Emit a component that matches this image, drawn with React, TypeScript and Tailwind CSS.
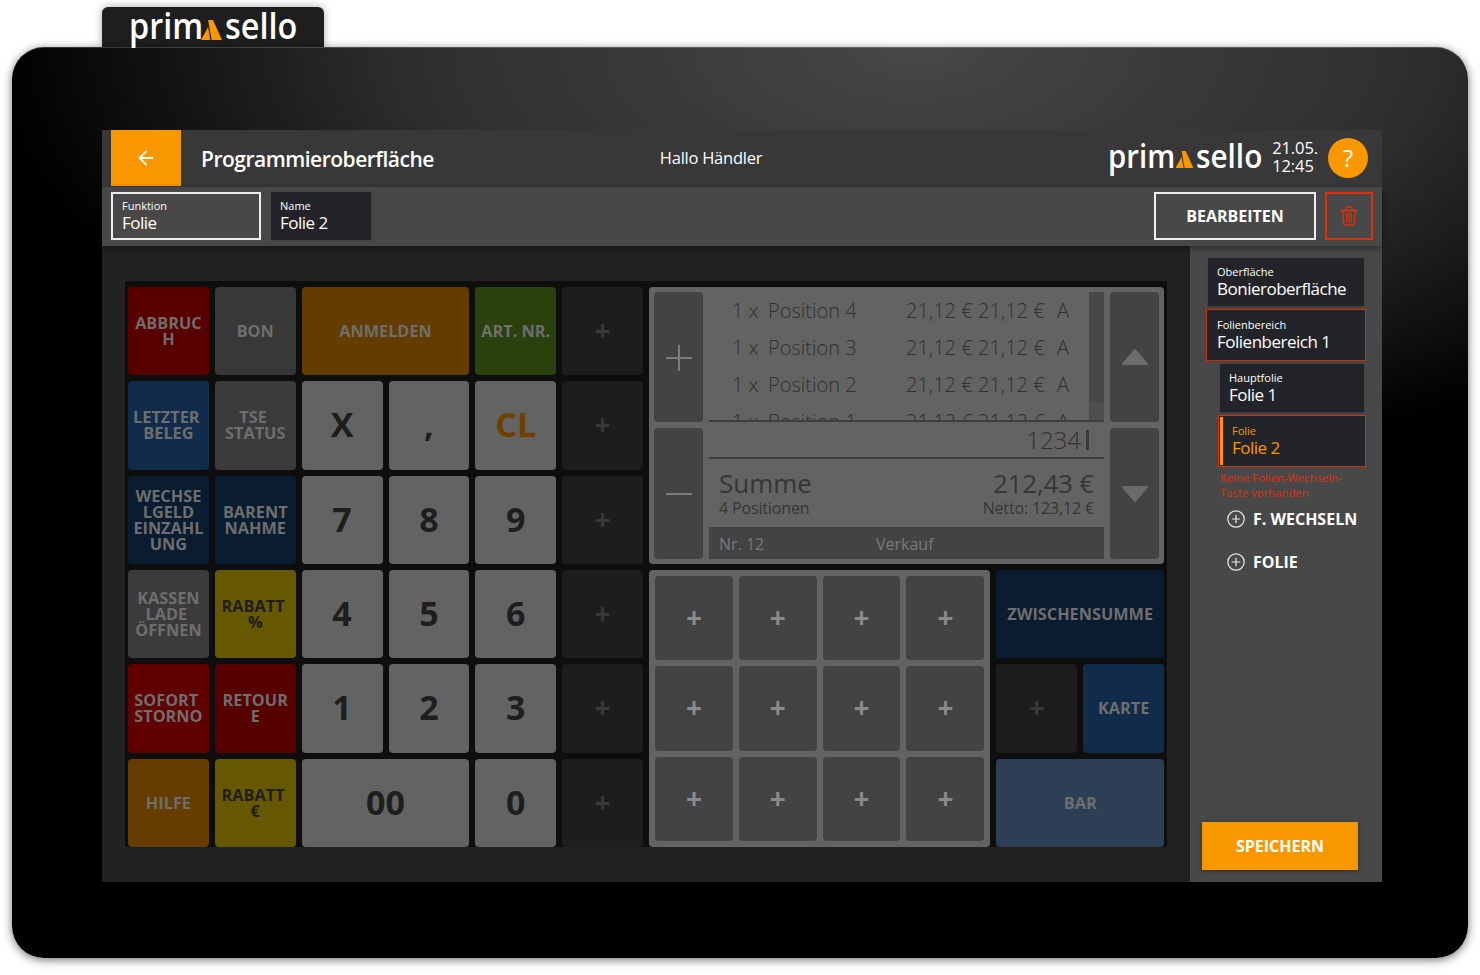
import React from 'react';
import { Plus, Minus, ArrowLeft } from 'lucide-react';

const openSans = { fontFamily: '"Open Sans", sans-serif' };

const LogoMark = ({ className }: { className: string }) => (
  <svg viewBox="0 0 65 62" className={className}>
    <path d="M0 62 L22 22 L29 62 Z" fill="#f99700" />
    <path d="M22 0 L37 0 L65 62 L33 62 Z" fill="#f99700" />
  </svg>
);

const Logo = ({ small }: { small?: boolean }) =>
  small ? (
    <div className="mb-[5px] flex h-[33px] items-end text-[33px] font-semibold leading-[33px] text-white">
      <span className="inline-block w-[64px] origin-left scale-x-[0.89] whitespace-nowrap">prim</span>
      <LogoMark className="mb-[4px] ml-[3px] h-[17px] w-[19px]" />
      <span className="ml-[2px] inline-block w-[66px] origin-left scale-x-[0.9] whitespace-nowrap">sello</span>
    </div>
  ) : (
    <div className="flex h-[36px] items-end text-[36px] font-semibold leading-[36px] text-white">
      <span className="inline-block w-[71px] origin-left scale-x-[0.9] whitespace-nowrap">prim</span>
      <LogoMark className="mb-[4px] ml-px h-[20px] w-[21px]" />
      <span className="ml-[3px] inline-block w-[72px] origin-left scale-x-[0.9] whitespace-nowrap">sello</span>
    </div>
  );

type Cell = { label: string; bg: string; text: string; span?: string; size?: string };

const dimText = 'text-[#6e6e6e]';

const keys: Cell[] = [
  { label: 'ABBRUCH', bg: 'bg-[#580000]', text: dimText },
  { label: 'BON', bg: 'bg-[#383838]', text: dimText },
  { label: 'ANMELDEN', bg: 'bg-[#653c00]', text: dimText, span: 'col-span-2' },
  { label: 'ART. NR.', bg: 'bg-[#2a400d]', text: dimText },
  { label: '+', bg: 'bg-[#1d1d1d]', text: 'text-[#383838]' },
  { label: 'LETZTER\u00a0 BELEG', bg: 'bg-[#112c4a]', text: dimText },
  { label: 'TSE\u00a0 STATUS', bg: 'bg-[#3b3b3b]', text: dimText },
  { label: 'X', bg: 'bg-[#636363]', text: 'text-[#1e1e1e]', size: 'key' },
  { label: ',', bg: 'bg-[#636363]', text: 'text-[#1e1e1e]', size: 'key' },
  { label: 'CL', bg: 'bg-[#636363]', text: 'text-[#6e4100]', size: 'key' },
  { label: '+', bg: 'bg-[#1d1d1d]', text: 'text-[#383838]' },
  { label: 'WECHSELGELD EINZAHLUNG', bg: 'bg-[#0a1c30]', text: dimText },
  { label: 'BARENTNAHME', bg: 'bg-[#0a1c30]', text: dimText },
  { label: '7', bg: 'bg-[#636363]', text: 'text-[#1e1e1e]', size: 'key' },
  { label: '8', bg: 'bg-[#636363]', text: 'text-[#1e1e1e]', size: 'key' },
  { label: '9', bg: 'bg-[#636363]', text: 'text-[#1e1e1e]', size: 'key' },
  { label: '+', bg: 'bg-[#1d1d1d]', text: 'text-[#383838]' },
];

const keysLower: Cell[][] = [
  [
    { label: 'KASSEN LADE\u00a0 ÖFFNEN', bg: 'bg-[#3b3b3b]', text: dimText },
    { label: 'RABATT\u00a0 %', bg: 'bg-[#665800]', text: 'text-[#1e1e1e]' },
    { label: '4', bg: 'bg-[#636363]', text: 'text-[#1e1e1e]', size: 'key' },
    { label: '5', bg: 'bg-[#636363]', text: 'text-[#1e1e1e]', size: 'key' },
    { label: '6', bg: 'bg-[#636363]', text: 'text-[#1e1e1e]', size: 'key' },
    { label: '+', bg: 'bg-[#1d1d1d]', text: 'text-[#383838]' },
  ],
  [
    { label: 'SOFORT\u00a0 STORNO', bg: 'bg-[#600000]', text: dimText },
    { label: 'RETOURE', bg: 'bg-[#560000]', text: dimText },
    { label: '1', bg: 'bg-[#636363]', text: 'text-[#1e1e1e]', size: 'key' },
    { label: '2', bg: 'bg-[#636363]', text: 'text-[#1e1e1e]', size: 'key' },
    { label: '3', bg: 'bg-[#636363]', text: 'text-[#1e1e1e]', size: 'key' },
    { label: '+', bg: 'bg-[#1d1d1d]', text: 'text-[#383838]' },
  ],
  [
    { label: 'HILFE', bg: 'bg-[#663c00]', text: dimText },
    { label: 'RABATT\u00a0 €', bg: 'bg-[#665800]', text: 'text-[#1e1e1e]' },
    { label: '00', bg: 'bg-[#636363]', text: 'text-[#1e1e1e]', span: 'col-span-2', size: 'key' },
    { label: '0', bg: 'bg-[#636363]', text: 'text-[#1e1e1e]', size: 'key' },
    { label: '+', bg: 'bg-[#1d1d1d]', text: 'text-[#383838]' },
  ],
];

const PosKey = ({ cell }: { cell: Cell }) => (
  <div
    className={`flex items-center justify-center rounded-[4px] px-[5px] text-center font-bold wrap-break-word ${cell.bg} ${cell.text} ${cell.span ?? ''} ${
      cell.size === 'key'
        ? 'pb-[2px] text-[34px] leading-none'
        : cell.label === '+'
          ? 'pb-[2px] text-[28px] leading-none'
          : 'text-[16.3px] leading-[16px]'
    }`}
  >
    <span className="min-w-0">{cell.label}</span>
  </div>
);

const positions = ['Position 4', 'Position 3', 'Position 2', 'Position 1'];

const Receipt = () => (
  <div className="col-span-6 row-span-3 flex gap-[6px] rounded-[4px] bg-[#636363] p-[5px]">
    <div className="flex w-[49px] flex-col gap-[6px]">
      <div className="flex h-[130px] items-center justify-center rounded-[4px] bg-[#434343] pt-[2px]">
        <Plus size={42} strokeWidth={1.2} className="text-[#7c7c7c]" />
      </div>
      <div className="flex flex-1 items-center justify-center rounded-[4px] bg-[#434343]">
        <Minus size={42} strokeWidth={1.2} className="text-[#7c7c7c]" />
      </div>
    </div>

    <div className="flex flex-1 flex-col">
      <div className="flex h-[130px] border-b-2 border-[#3e3e3e]">
        <div className="flex-1 overflow-hidden text-[20px] font-light text-[#303030]">
          {positions.map((p) => (
            <div key={p} className="flex h-[37px] items-center pl-[23px]">
              <span className="w-[36px]">1 x</span>
              <span className="w-[138px]">{p}</span>
              <span className="w-[72px]">21,12 €</span>
              <span className="w-[79px]">21,12 €</span>
              <span>A</span>
            </div>
          ))}
        </div>
        <div className="w-[15px] bg-[#4f4f4f]">
          <div className="h-[110px] bg-[#484848]" />
        </div>
      </div>
      <div className="flex h-[37px] items-center justify-end border-b-2 border-[#3e3e3e] pr-[15px] text-[24px] font-light text-[#303030]">
        1234
        <div className="ml-[5px] h-[20px] w-[3px] bg-[#3a3a3a]" />
      </div>
      <div className="flex h-[68px] items-start justify-between px-[10px] pt-[8px] text-[#363636]">
        <div>
          <div className="text-[26px] font-medium leading-[32px]">Summe</div>
          <div className="text-[16px] leading-[18px] tracking-[-0.15px]">4 Positionen</div>
        </div>
        <div className="text-right">
          <div className="text-[26px] font-medium leading-[32px] tracking-[-0.2px]">212,43 €</div>
          <div className="text-[16px] leading-[18px] tracking-[-0.15px]">Netto: 123,12 €</div>
        </div>
      </div>
      <div className="flex h-[32px] items-center bg-[#434343] pl-[10px] pt-[2px] text-[16px] text-[#7a7a7a]">
        <span className="w-[157px]">Nr. 12</span>
        <span>Verkauf</span>
      </div>
    </div>

    <div className="flex w-[49px] flex-col gap-[6px]">
      <div className="flex h-[130px] items-center justify-center rounded-[4px] bg-[#434343]">
        <svg viewBox="0 0 28 18" className="h-[18px] w-[28px]">
          <path d="M14 2 L26 16 H2 Z" fill="#6b6b6b" stroke="#6b6b6b" strokeWidth="2" strokeLinejoin="round" />
        </svg>
      </div>
      <div className="flex flex-1 items-center justify-center rounded-[4px] bg-[#434343]">
        <svg viewBox="0 0 28 18" className="h-[18px] w-[28px]">
          <path d="M14 16 L26 2 H2 Z" fill="#6b6b6b" stroke="#6b6b6b" strokeWidth="2" strokeLinejoin="round" />
        </svg>
      </div>
    </div>
  </div>
);

const InfoBox = ({ label, value }: { label: string; value: string }) => (
  <div className="flex h-[48px] flex-col justify-center bg-[#232429] pl-[9px] shadow-sm">
    <div className="text-[11px] leading-[13px] text-white">{label}</div>
    <div className="text-[17px] leading-[21px] tracking-[-0.5px] text-white">{value}</div>
  </div>
);

const TrashIcon = () => (
  <svg viewBox="0 0 18 20" className="h-[20px] w-[18px]" fill="none" stroke="#e0300a" strokeWidth="1.3" strokeLinecap="round">
    <path d="M1 4.5 H17" />
    <path d="M6 4.5 V2.5 Q6 1 7.5 1 H10.5 Q12 1 12 2.5 V4.5" />
    <path d="M2.8 4.5 L3.8 18 Q3.9 19 5 19 H13 Q14.1 19 14.2 18 L15.2 4.5" />
    <path d="M6.6 7.5 V16" />
    <path d="M9 7.5 V16" />
    <path d="M11.4 7.5 V16" />
  </svg>
);

const CirclePlus = () => (
  <svg viewBox="0 0 18 18" className="h-[18px] w-[18px]" fill="none" stroke="#e8e8e8" strokeWidth="1.2">
    <circle cx="9" cy="9" r="8.2" />
    <path d="M9 4.8 V13.2 M4.8 9 H13.2" />
  </svg>
);

export default function App() {
  return (
    <div className="h-[975px] w-[1480px] overflow-hidden bg-white" style={openSans}>
      <div className="ml-[102px] mt-[7px] flex h-[40px] w-[222px] items-start justify-center rounded-t-[6px] bg-[#1e1e1e] pt-[1px] shadow-[0_0_8px_rgba(0,0,0,0.35)]">
        <Logo />
      </div>

      <div className="ml-[12px] h-[911px] w-[1456px] rounded-[32px] bg-[radial-gradient(ellipse_920px_440px_at_62%_0%,#474747_0%,#2e2e2e_55%,#000000_100%)] pl-[90px] pt-[83px] shadow-[inset_0_1px_0_rgba(255,255,255,0.18),0_2px_10px_rgba(0,0,0,0.55)]">
        <div className="flex h-[752px] w-[1280px] flex-col">
          <div className="flex h-[57px] items-start bg-[#383838] pl-[9px] pr-[14px]">
            <div className="flex h-[56px] w-[70px] items-center justify-center bg-[#f99700]">
              <ArrowLeft size={22} strokeWidth={2} className="text-white" />
            </div>
            <div className="ml-[20px] flex h-[56px] items-center pt-[4px] text-[21px] font-semibold tracking-[-0.5px] text-white">Programmieroberfläche</div>
            <div className="ml-[226px] flex h-[56px] items-center text-[16.5px] tracking-[-0.25px] text-white">Hallo Händler</div>
            <div className="ml-auto flex h-[56px] items-center">
              <Logo small />
              <div className="ml-[10px] pb-[2px] text-[16.5px] leading-[18px] tracking-[-0.1px] text-white">
                21.05.
                <br />
                12:45
              </div>
              <div className="ml-[10px] flex h-[40px] w-[40px] items-center justify-center rounded-full bg-[#f99700] text-[24px] text-white">?</div>
            </div>
          </div>

          <div className="relative z-10 flex h-[59px] items-start gap-[10px] bg-[#484848] pl-[9px] pr-[9px] pt-[5px] shadow-[0_2px_6px_rgba(0,0,0,0.4)]">
            <div className="flex h-[48px] w-[150px] flex-col justify-center border-2 border-[#eeeeee] pl-[9px]">
              <div className="text-[11px] leading-[13px] text-white">Funktion</div>
              <div className="text-[17px] leading-[21px] tracking-[-0.5px] text-white">Folie</div>
            </div>
            <div className="w-[100px]">
              <InfoBox label="Name" value="Folie 2" />
            </div>
            <div className="ml-auto flex h-[48px] w-[162px] items-center justify-center border-2 border-[#eeeeee] text-[16px] font-bold text-white">BEARBEITEN</div>
            <div className="-ml-px flex h-[48px] w-[48px] items-center justify-center border-2 border-[#e0300a]">
              <TrashIcon />
            </div>
          </div>

          <div className="flex flex-1">
            <div className="flex-1 bg-[#222222] pl-[23px] pt-[35px]">
              <div className="grid h-[566px] w-[1042px] grid-cols-[repeat(12,minmax(0,1fr))] grid-rows-6 gap-[6px] bg-[#0e0e0e] px-[3px] pt-[6px]">
                {keys.slice(0, 5).map((c, i) => <PosKey key={i} cell={c} />)}
                <Receipt />
                {keys.slice(5).map((c, i) => <PosKey key={i} cell={c} />)}
                {keysLower[0].map((c, i) => <PosKey key={i} cell={c} />)}
                <div className="col-span-4 row-span-3 grid grid-cols-4 grid-rows-3 gap-[6px] rounded-[4px] bg-[#636363] p-[6px]">
                  {Array.from({ length: 12 }).map((_, i) => (
                    <div key={i} className="flex items-center justify-center rounded-[4px] bg-[#434343] pb-[2px] text-[28px] font-bold leading-none text-[#8a8a8a]">+</div>
                  ))}
                </div>
                <PosKey cell={{ label: 'ZWISCHENSUMME', bg: 'bg-[#0a1c30]', text: dimText, span: 'col-span-2' }} />
                {keysLower[1].map((c, i) => <PosKey key={i} cell={c} />)}
                <PosKey cell={{ label: '+', bg: 'bg-[#1d1d1d]', text: 'text-[#383838]' }} />
                <PosKey cell={{ label: 'KARTE', bg: 'bg-[#112c4a]', text: dimText }} />
                {keysLower[2].map((c, i) => <PosKey key={i} cell={c} />)}
                <PosKey cell={{ label: 'BAR', bg: 'bg-[#2c3f55]', text: dimText, span: 'col-span-2' }} />
              </div>
            </div>

            <div className="flex w-[192px] flex-col bg-[#484848] pl-[18px] pr-[18px] pt-[12px]">
              <InfoBox label="Oberfläche" value="Bonieroberfläche" />
              <div className="-mx-[2px] mt-[3px] border border-[#d8300a] bg-[#232429] p-px">
                <InfoBox label="Folienbereich" value="Folienbereich 1" />
              </div>
              <div className="ml-[12px] mt-[3px]">
                <InfoBox label="Hauptfolie" value="Folie 1" />
              </div>
              <div className="-mr-[2px] ml-[10px] mt-[3px] border border-[#d8300a] bg-[#232429] p-px">
                <div className="flex h-[48px] flex-col justify-center border-l-[3px] border-[#f99700] bg-[#232429] pl-[9px] text-[#f99700]">
                  <div className="text-[11px] leading-[13px]">Folie</div>
                  <div className="text-[17px] leading-[21px] tracking-[-0.5px]">Folie 2</div>
                </div>
              </div>
              <div className="ml-[12px] mt-[3px] w-[150px] text-[11.3px] leading-[15px] text-[#e0300f]">Keine Folien-Wechseln-Taste vorhanden</div>
              <div className="ml-[19px] mt-[7px] flex items-center gap-[8px] text-[16px] font-bold text-white">
                <CirclePlus />
                F. WECHSELN
              </div>
              <div className="ml-[19px] mt-[19px] flex items-center gap-[8px] text-[16px] font-bold text-white">
                <CirclePlus />
                FOLIE
              </div>
              <div className="-ml-[6px] mb-[12px] mt-auto flex h-[48px] w-[156px] items-center justify-center bg-[#f99700] text-[16px] font-bold text-white shadow-[0_1px_4px_rgba(0,0,0,0.4)]">SPEICHERN</div>
            </div>
          </div>
        </div>
      </div>
    </div>
  );
}
